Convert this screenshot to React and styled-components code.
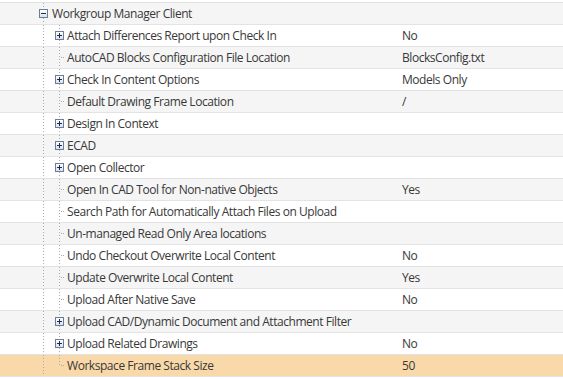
import styled, { createGlobalStyle } from "styled-components";

const GlobalStyle = createGlobalStyle`
  html, body {
    margin: 0;
    padding: 0;
    background: #ffffff;
  }
  body {
    font-family: "Segoe UI", "Open Sans", "Noto Sans", sans-serif;
    font-size: 12px;
    letter-spacing: -0.45px;
    color: #383838;
  }
`;

const Grid = styled.div`
  width: 563px;
  padding-top: 2px;
`;

const Row = styled.div`
  display: flex;
  align-items: center;
  height: 21px;
  border-top: 1px solid #e3e3e3;
  background: ${(p) =>
    p.$selected ? "#f9d9aa" : p.$alt ? "#f5f5f5" : "#ffffff"};
  ${(p) => p.$last && "border-bottom: 1px solid #e3e3e3;"}
`;

const NameCell = styled.div`
  display: flex;
  align-items: center;
  width: 402px;
  height: 100%;
  flex-shrink: 0;
  white-space: nowrap;
  overflow: hidden;
`;

const Label = styled.span`
  line-height: 21px;
  padding-left: ${(p) => (p.$root ? "4px" : "3px")};
`;

const ValueCell = styled.div`
  flex: 1;
  line-height: 21px;
  white-space: nowrap;
`;

const rows = [
  { name: "Workgroup Manager Client", root: true, expand: "minus" },
  { name: "Attach Differences Report upon Check In", expand: "plus", value: "No" },
  { name: "AutoCAD Blocks Configuration File Location", value: "BlocksConfig.txt" },
  { name: "Check In Content Options", expand: "plus", value: "Models Only" },
  { name: "Default Drawing Frame Location", value: "/" },
  { name: "Design In Context", expand: "plus" },
  { name: "ECAD", expand: "plus" },
  { name: "Open Collector", expand: "plus" },
  { name: "Open In CAD Tool for Non-native Objects", value: "Yes" },
  { name: "Search Path for Automatically Attach Files on Upload" },
  { name: "Un-managed Read Only Area locations" },
  { name: "Undo Checkout Overwrite Local Content", value: "No" },
  { name: "Update Overwrite Local Content", value: "Yes" },
  { name: "Upload After Native Save", value: "No" },
  { name: "Upload CAD/Dynamic Document and Attachment Filter", expand: "plus" },
  { name: "Upload Related Drawings", expand: "plus", value: "No" },
  { name: "Workspace Frame Stack Size", value: "50", selected: true },
];

const dot = "#aaaaaa";

// tree guides + expander, drawn per row
const Guides = ({ root, expand, last }) => {
  const bx = root ? 39 : 55;
  const width = root ? 48 : 64;
  return (
    <svg width={width} height="21" style={{ flexShrink: 0, display: "block" }}>
      <line x1="43.5" y1="0" x2="43.5" y2="21" stroke={dot} strokeDasharray="1 2" />
      {!root && (
        <line
          x1="59.5"
          y1="0"
          x2="59.5"
          y2={last ? 11 : 21}
          stroke={dot}
          strokeDasharray="1 2"
        />
      )}
      {!root && !expand && (
        <line x1="61" y1="10.5" x2="65" y2="10.5" stroke={dot} strokeDasharray="1 1" />
      )}
      {expand && (
        <g>
          <defs>
            <linearGradient id="bx" x1="0" y1="0" x2="0" y2="1">
              <stop offset="0" stopColor="#ffffff" />
              <stop offset="1" stopColor="#d8e0ec" />
            </linearGradient>
          </defs>
          <rect x={bx + 0.5} y="6.5" width="8" height="8" fill="url(#bx)" stroke="#6b7d99" />
          <line x1={bx + 2} y1="10.5" x2={bx + 7} y2="10.5" stroke="#1f2d48" />
          {expand === "plus" && (
            <line x1={bx + 4.5} y1="8" x2={bx + 4.5} y2="13" stroke="#1f2d48" />
          )}
        </g>
      )}
    </svg>
  );
};

const App = () => {
  return (
    <>
      <GlobalStyle />
      <Grid>
        {rows.map((r, i) => (
          <Row
            key={r.name}
            $alt={i % 2 === 0}
            $selected={r.selected}
            $last={i === rows.length - 1}
          >
            <NameCell>
              <Guides root={r.root} expand={r.expand} last={i === rows.length - 1} />
              <Label $root={r.root}>{r.name}</Label>
            </NameCell>
            <ValueCell>{r.value || ""}</ValueCell>
          </Row>
        ))}
      </Grid>
    </>
  );
};

export default App;
